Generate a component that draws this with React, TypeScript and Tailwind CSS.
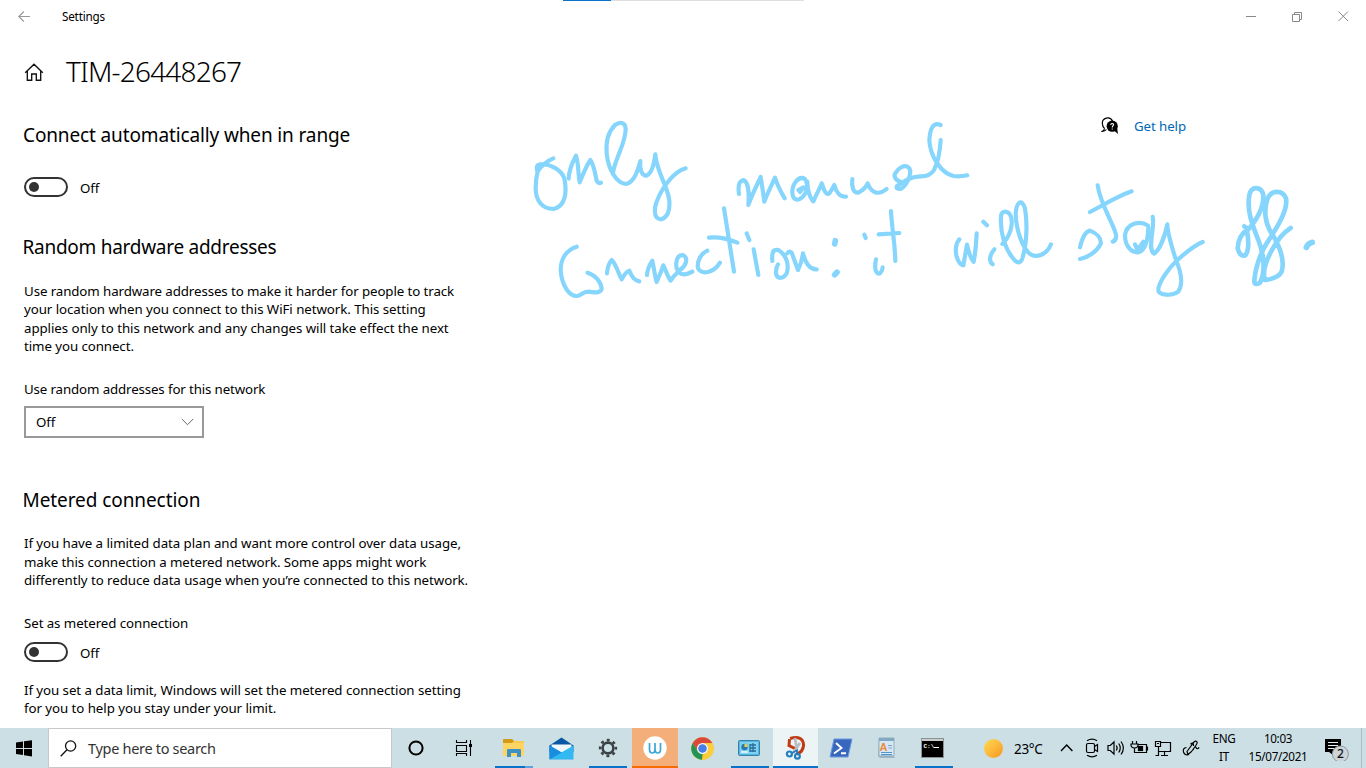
import React from "react";

const FONT = "font-['Noto_Sans','Open_Sans',sans-serif]";

function TextLine({ children, className }: { children: React.ReactNode; className: string }) {
  return <span className={`block whitespace-nowrap ${className}`}>{children}</span>;
}

function Toggle() {
  return (
    <div className="flex h-5 items-center gap-3 text-[13.3px] text-black">
      <div className="flex h-5 w-11 items-center rounded-full border-2 border-[#333] pl-[3px]">
        <div className="size-[10px] rounded-full bg-[#333]" />
      </div>
      <span className="pt-[3px] tracking-[-0.1px]">Off</span>
    </div>
  );
}

function Ink() {
  return (
    <svg
      className="pointer-events-none absolute left-0 top-0"
      width="1366"
      height="728"
      viewBox="0 0 1366 728"
      fill="none"
      stroke="#85d5fd"
      strokeWidth="12.5"
      strokeLinecap="round"
      strokeLinejoin="round"
    >
      <g transform="translate(520 110) scale(.33333)">
        <path d="M100 145Q70 157 52 186C50 170 48 166 60 163C90 160 125 180 133 205C142 250 135 290 100 297C65 297 47 270 47 235C47 210 50 195 54 180" />
        <path d="M146 206C147 180 158 155 168 137C176 160 174 190 179 217C188 195 200 165 211 150C222 165 225 190 230 212Q235 222 243 218" />
        <path d="M279 190C283 150 318 100 317 55C315 35 298 35 285 45C265 65 257 95 260 130C265 180 290 220 318 222C340 218 352 190 361 153C358 175 365 198 380 197C395 190 402 165 406 133C408 170 430 210 440 240C455 280 450 320 424 328C400 328 402 295 410 275C425 235 460 185 497 175" />
        <path d="M170 410C140 420 122 445 122 480C125 530 150 560 172 558C185 555 188 545 205 545C230 550 245 547 245 535C243 515 225 495 203 488" />
        <path d="M261 490C262 475 265 462 275 450C288 462 295 490 305 508C312 495 320 485 328 482C335 500 345 512 358 514" />
        <path d="M381 495C382 480 388 465 397 452C402 475 405 500 410 516C417 500 425 480 430 466C437 480 443 500 452 512C462 495 470 490 480 480C500 465 505 445 490 436C475 432 465 450 470 475C478 500 500 495 517 485" />
        <path d="M562 422C545 430 530 450 534 475C545 495 580 490 600 458" />
        <path d="M612 295L642 485M567 383C590 380 620 385 652 398" />
      </g>
      <g transform="translate(720 110) scale(.33333)">
        <path d="M57 252C53 225 58 213 70 210C85 215 88 250 85 285C92 265 108 230 122 201C127 230 130 255 133 275C142 250 155 225 165 203C172 225 185 250 194 265" />
        <path d="M255 207C235 195 215 225 217 250C220 275 240 275 256 250C265 230 262 210 250 204M235 240L250 232L240 246M262 215C262 240 270 265 280 274C290 250 300 235 305 220C312 240 318 258 328 250C335 240 338 235 343 225C348 245 360 262 378 260" />
        <path d="M397 207C394 230 400 250 415 248C430 240 438 232 443 220C450 240 470 262 500 237" />
        <path d="M544 216C526 212 520 198 526 190C535 173 552 165 562 170C582 180 563 222 545 235C535 240 526 234 531 228C550 215 570 200 600 199Q630 200 642 180C655 155 660 125 662 90" />
        <path d="M662 45C640 35 630 55 628 90C630 140 665 190 700 198Q720 201 742 196" />
        <path d="M80 370L88 390M101 418L115 495M157 453C155 425 160 417 175 420C200 435 208 465 200 490C190 508 170 508 168 490Q167 473 174 463M202 430Q208 421 215 428L234 480Q246 455 249 430Q262 480 290 478" />
        <path strokeWidth="17" d="M346 392L344 402M351 487L344 494" />
        <path d="M433 374L437 384M468 448C462 475 468 495 480 490Q488 482 488 472M513 303C515 350 525 400 526 453M476 373L538 369" />
      </g>
      <g transform="translate(930 170) scale(.33333)">
        <path d="M88 208C75 225 75 240 80 260Q88 285 100 286L111 224Q120 264 131 275Q138 240 140 190M160 155L171 166M193 238C178 255 176 275 188 283" />
        <path d="M217 222C240 200 250 165 243 140C235 120 213 120 213 140C210 190 225 240 255 272Q270 285 277 265C290 225 293 160 285 115C275 85 260 95 257 130C258 185 280 235 300 252C320 265 350 255 363 223" />
        <path d="M450 232C455 210 465 185 480 182C500 190 515 205 512 222C500 245 475 262 450 267M503 46C510 100 545 150 557 190Q562 210 548 215M480 126C520 105 560 80 605 64" />
      </g>
      <g transform="translate(1080 100) scale(.33333)">
        <path d="M204 377C180 360 140 370 135 405C135 440 155 458 175 457C198 450 204 420 205 382M165 433L173 450L190 425M218 350C226 385 200 445 222 461C240 450 255 405 262 373C262 400 275 440 288 480C305 520 308 555 295 575C275 590 235 585 235 570C235 550 265 505 290 482C320 455 345 435 368 426" />
        <path strokeWidth="14" d="M493 379L505 387Q475 405 473 445Q480 472 496 466C508 450 505 415 501 393C530 360 552 320 550 285C545 260 515 255 508 285C500 330 515 370 535 420C555 470 555 520 540 548Q523 558 523 543C525 510 540 460 560 430C590 385 625 330 618 295C608 270 575 268 563 295C550 330 555 370 575 400C600 440 615 480 605 515Q595 535 555 540C540 500 590 410 632 384" />
        <path strokeWidth="17" d="M679 442Q684 430 697 427" />
      </g>
    </svg>
  );
}

function HomeIcon() {
  return (
    <svg width="20" height="20" viewBox="0 0 20 20" fill="none" stroke="#111" strokeWidth="1.35">
      <path d="M1.2 10.7L10 2.2L18.8 10.7M3.3 9V18.2H7.7V12H12.3V18.2H16.7V9" />
    </svg>
  );
}

function HelpIcon() {
  return (
    <svg width="18" height="18" viewBox="0 0 18 18" fill="none">
      <path d="M3.5 11.4Q1.4 9.6 1.4 6.8A5.3 5.3 0 0 1 11.5 4M3.5 11.4Q3.5 13 1.2 14.4Q4 14.4 5.5 12.5" stroke="#000" strokeWidth="1.2" />
      <circle cx="11.2" cy="9.2" r="5.6" fill="#000" />
      <path d="M13 13.5L17 17L16 10Z" fill="#000" />
      <path d="M9.7 8Q9.8 6.5 11.2 6.5Q12.9 6.6 12.5 8.2Q11.2 9 11.2 10.4M11.2 11.4V12.4" stroke="#fff" strokeWidth="1.1" />
    </svg>
  );
}

function Task({ width, bg = "", bar = "", children }: { width: string; bg?: string; bar?: string; children: React.ReactNode }) {
  return (
    <div className={`flex h-10 shrink-0 flex-col items-center ${width} ${bg}`}>
      <div className="flex h-[38px] items-center justify-center pt-[2px]">{children}</div>
      <div className={`h-[2px] ${bar}`} />
    </div>
  );
}

function Taskbar() {
  return (
    <div className="flex h-10 w-full bg-[#cbdfe5] text-black">
      <div className="flex w-12 items-center justify-center">
        <svg width="17" height="17" viewBox="0 0 17 17"><path d="M0 2.5L7 1.5V8H0ZM8 1.3L16 .2V8H8ZM0 9H7V15L0 14ZM8 9H16V16.4L8 15.2Z" /></svg>
      </div>
      <div className="flex h-10 w-[344px] items-center gap-[11px] border border-[#c5c9cb] bg-white pl-[11px]">
        <svg width="17" height="17" viewBox="0 0 17 17" fill="none" stroke="#111" strokeWidth="1.3"><circle cx="10.6" cy="6" r="5.1" /><path d="M7 9.8L.7 16.2" /></svg>
        <span className="whitespace-nowrap pt-[2px] text-[14.5px] tracking-[-0.31px] text-[#333]">Type here to search</span>
      </div>
      <Task width="w-12">
        <svg width="16" height="16" viewBox="0 0 16 16"><circle cx="8" cy="8" r="6.6" fill="none" stroke="#000" strokeWidth="2" /></svg>
      </Task>
      <Task width="w-[47px]">
        <svg width="18" height="16" viewBox="0 0 18 16" fill="none" stroke="#000" strokeWidth="1.1"><path d="M1.5 0V2.5H11.5V0M1.5 5.5H11.5V11.5H1.5ZM1.5 16V13.5H11.5V16M15.5 0V16" /><rect x="14" y="4" width="3" height="3" fill="#000" stroke="none" /></svg>
      </Task>
      <div className="ml-[4px] flex">
        <Task width="w-[46px]" bar="w-[38px] bg-[linear-gradient(90deg,#0a72c8_79%,#5ea2dc_79%)]">
          <svg width="22" height="20" viewBox="0 0 22 20">
            <path d="M0 2Q0 1 1 1H9L11 3H20Q21 3 21 4V18H0Z" fill="#f9cb4c" /><path d="M0 2Q0 1 1 1H9L11 3L9 5H0Z" fill="#d49a16" /><path d="M0 5H21V18H0Z" fill="#fed463" /><path d="M4 19V12Q4 11 5 11H17Q18 11 18 12V19H14V15H8V19Z" fill="#3e91c5" />
          </svg>
        </Task>
        <Task width="w-[48px]">
          <svg width="25" height="23" viewBox="0 0 25 23"><path d="M.5 8.5L12.5 .5L24.5 8.5V15H.5Z" fill="#0b58a5" /><path d="M2.5 7.5H22.5V14L12.5 17L2.5 13Z" fill="#f1f8fd" /><path d="M.5 8.5L24.5 22.2H.5Z" fill="#168bdc" /><path d="M24.5 8.5V22.2H.5Z" fill="#33b9f2" /><path d="M.5 8.5V22.2L12.5 15.5Z" fill="#198ede" /></svg>
        </Task>
        <Task width="w-[46px]" bar="w-[38px] bg-[#0a72c8]">
          <svg width="20" height="20" viewBox="0 0 20 20" fill="none" stroke="#3b4145"><circle cx="10" cy="10" r="5.4" strokeWidth="2.6" /><circle cx="10" cy="10" r="7.9" strokeWidth="2.5" strokeDasharray="2.9 3.305" strokeDashoffset="1.45" /></svg>
        </Task>
        <Task width="ml-px w-[46px]" bg="bg-[#f3ae79]" bar="w-full bg-[#f56b00]">
          <svg className="mr-px" width="24" height="24" viewBox="0 0 24 24"><circle cx="12" cy="12" r="11.7" fill="#fff" /><path d="M6.5 7V13Q6.5 17 9.3 17Q12 17 12 13V7M12 13Q12 17 14.8 17Q17.5 17 17.5 13V7" fill="none" stroke="#3aa6d8" strokeWidth="1.7" /></svg>
        </Task>
        <Task width="ml-px w-[47px]">
          <svg width="23" height="23" viewBox="0 0 23 23">
            <circle cx="11.5" cy="11.5" r="11.3" fill="#fbc72f" /><path d="M1.7 5.9A11.3 11.3 0 0 1 21.3 5.9H11.5V11.5L6.7 14.3Z" fill="#da493b" /><path d="M1.7 5.9L6.7 14.3L11.5 17L11 22.8A11.3 11.3 0 0 1 1.7 5.9" fill="#239452" /><path d="M11 22.8L16.4 14.2V7H21.6A11.3 11.3 0 0 1 11 22.8" fill="#fdce3b" /><circle cx="11.5" cy="11.5" r="5.5" fill="#f6faff" /><circle cx="11.5" cy="11.5" r="4.3" fill="#477fe8" />
          </svg>
        </Task>
        <Task width="w-[47px]" bar="w-[38px] bg-[#0a72c8]">
          <svg className="mr-[2px]" width="22" height="18" viewBox="0 0 22 18"><rect x=".5" y="1.5" width="21" height="15" rx="1" fill="#54b5e3" stroke="#3884a8" /><rect x="2" y="3" width="18" height="12" fill="#80d3f0" /><circle cx="6.5" cy="8" r="3.2" fill="#277aad" /><path d="M6.5 8V4.8A3.2 3.2 0 0 1 9.7 8Z" fill="#f7cf49" /><path d="M12 5V13M12 6H18M12 9H18M12 12H18M15 4V13" stroke="#276e9c" strokeWidth="1.3" /><path d="M3 13H10" stroke="#fff" strokeWidth="1.3" /></svg>
        </Task>
        <Task width="w-[45px]" bg="bg-[#edf4f6]" bar="w-full bg-[#0a72c8]">
          <svg width="22" height="24" viewBox="0 0 22 24" fill="none"><path d="M5 2.5Q18-1 18.6 9Q18 16 12 18M4.5 3L4 9.5Q8 11.5 12 13.5" stroke="#c23a13" strokeWidth="3" /><path d="M10 2L12 15M15 7L8 17" stroke="#b8bcc0" strokeWidth="2.7" /><circle cx="4.4" cy="18" r="2.5" stroke="#237fbd" strokeWidth="2.2" /><circle cx="12.4" cy="20.3" r="2.4" stroke="#237fbd" strokeWidth="2.2" /><path d="M7 17L12 14.5V18" stroke="#237fbd" strokeWidth="1.8" /></svg>
        </Task>
        <Task width="w-[46px]">
          <svg width="24" height="20" viewBox="0 0 24 20"><path d="M5 1H23L19 19H1Z" fill="#3867bd" stroke="#6f9ae0" /><path d="M7 5L12.5 10L5 15.5M12 15.2H17" fill="none" stroke="#fff" strokeWidth="1.9" /></svg>
        </Task>
        <Task width="w-[46px]">
          <svg width="20" height="22" viewBox="0 0 20 22"><path d="M2 1H17V20L19 21H3L1 19Z" fill="#a4b6c2" /><path d="M2 1H17V19H2Z" fill="#d5e7f2" stroke="#8ca4b4" strokeWidth=".8" /><path d="M2 1H17V4H2Z" fill="#82a7c3" /><path d="M4 15.5H15M4 17.6H15" stroke="#5794c9" strokeWidth="1.1" /><text x="2.6" y="13.8" fontSize="11" fontWeight="700" fill="#ed883e" fontFamily="Liberation Sans">A</text><path d="M11 8.5H15M11.5 11H15" stroke="#7da4c6" /></svg>
        </Task>
        <Task width="w-[47px]" bar="w-[38px] bg-[#0a72c8]">
          <svg className="mr-[2px]" width="23" height="20" viewBox="0 0 23 20"><rect x=".5" y=".5" width="22" height="19" fill="#000" stroke="#8d9294" /><rect x="1" y="1" width="21" height="2" fill="#c8cccd" /><text x="2.5" y="10" fontSize="6" fontWeight="700" fill="#fff" fontFamily="Liberation Mono">C:\</text><path d="M13 9.5H18" stroke="#fff" /></svg>
        </Task>
      </div>
      <div className="ml-[27px] flex h-10 items-center">
        <div className="size-[19px] rounded-full bg-linear-to-br from-[#ffda52] to-[#f59720]" />
        <span className="ml-[11px] w-[46px] whitespace-nowrap pt-[2px] text-[13.5px] tracking-[-0.3px]">23°C</span>
        <svg width="140" height="24" viewBox="0 0 140 24" fill="none" stroke="#000" strokeWidth="1.2">
          <path d="M1 15L6.7 9L12.4 15" strokeWidth="1.4" />
          <path d="M27 4.7Q32 1.5 37 4.7M27 19.3Q32 22.5 37 19.3" /><rect x="26.5" y="7.5" width="8" height="9" rx="1.5" /><path d="M34.5 10.5L37.5 8.5V15.5L34.5 13.5" />
          <path d="M48 9.5H50.3L54 6V18L50.3 14.5H48ZM56.3 9.5Q58 12 56.3 14.5M58.7 7.5Q61.8 12 58.7 16.5M61 5.5Q65.7 12 61 18.5" />
          <path d="M78 8.5H86.5V16.5H74.5V14M87.5 10.5V14.5M72.5 5V8M76.5 5V8M71 8H78V9.5Q77.5 12 74.5 12Q71.5 12 71 9.5ZM74.5 12V17" /><rect x="78.5" y="10.5" width="4" height="4" fill="#000" />
          <path d="M101 6.5H110.5V15.5H98.5V11M104.5 15.5V19M101 19.5H108M95.5 5.5H100.5V10.5H95.5ZM98.5 11V19.5H95.5M97 7.5H99" />
          <path d="M126.5 11.5Q122.5 12 123.5 16Q125 20 129 18.5M127 15.5L134 6Q136 4 137.2 6.2Q137.5 8 131.5 15.5L128 18.5ZM130.5 8Q134 5.5 133.5 10M133 14Q135 9.5 136 11.5Q137 14 139.2 11.5" />
        </svg>
        <div className="ml-[6px] flex w-[36px] -translate-y-px flex-col items-center text-[11.7px] leading-[18px] tracking-[-0.35px]"><span>ENG</span><span>IT</span></div>
        <div className="ml-[3px] flex w-[66px] -translate-y-px flex-col items-center whitespace-nowrap text-[11.7px] leading-[18px] tracking-[-0.33px]"><span>10:03</span><span>15/07/2021</span></div>
        <svg className="ml-[13px]" width="28" height="26" viewBox="0 0 28 26"><path d="M1 4H17V17H9V20L5 17H1Z" fill="#000" /><path d="M4 7.5H14M4 10.5H14M4 13.5H10" stroke="#e4eef1" strokeWidth="1.1" /><circle cx="16.4" cy="19" r="8" fill="#cdd5d9" stroke="#8e989e" /><text x="16.4" y="23.4" textAnchor="middle" fontSize="12" fill="#111" stroke="#111" strokeWidth=".2" fontFamily="Noto Sans">2</text></svg>
        <div className="ml-[9px] h-10 w-px bg-[#a9bdc4]" />
      </div>
    </div>
  );
}

export default function App() {
  return (
    <div className={`relative flex h-[768px] w-[1366px] flex-col overflow-hidden bg-white text-black ${FONT}`}>
      <div className="flex h-px pl-[563px]"><div className="w-12 bg-[#0a72c8]" /><div className="w-[193px] bg-[#dfdfdf]" /></div>
      <header className="flex h-[31px] items-center pl-[18px] pr-[17px]">
        <svg width="13" height="12" viewBox="0 0 13 12" fill="none" stroke="#999" strokeWidth="1.1"><path d="M12 5.5H.8M5.8 .5L.8 5.5L5.8 10.5" /></svg>
        <span className="ml-[31px] text-[11.7px] tracking-[-0.2px]">Settings</span>
        <div className="ml-auto flex items-center gap-9 text-[#888]">
          <svg width="10" height="10" viewBox="0 0 10 10" stroke="currentColor"><path d="M0 4.5H10" /></svg>
          <svg width="10" height="10" viewBox="0 0 10 10" fill="none" stroke="currentColor"><path d="M.5 2.5H7.5V9.5H.5ZM2.5 2.5V.5H9.5V7.5H7.5" /></svg>
          <svg width="11" height="11" viewBox="0 0 11 11" stroke="currentColor"><path d="M.5 .5L10 10M10 .5L.5 10" /></svg>
        </div>
      </header>
      <div className="flex h-20 items-center pl-6"><HomeIcon /><h1 className="ml-[22px] whitespace-nowrap pb-[2px] text-[28px] font-light tracking-[-0.8px]">TIM-26448267</h1></div>
      <main className="flex h-[616px] justify-between pl-6 pr-[180px]">
        <section className="w-[460px] text-[13.3px]">
          <h2 className="-ml-px mt-[8px] h-[30px] whitespace-nowrap text-[19px] leading-[30px] tracking-[-0.13px]">Connect automatically when in range</h2>
          <div className="mt-[27px]"><Toggle /></div>
          <h2 className="-ml-[1.5px] mt-[35px] h-[30px] whitespace-nowrap text-[19px] leading-[30px] tracking-[-0.27px]">Random hardware addresses</h2>
          <div className="mt-[20px] leading-[18.33px]">
            <TextLine className="tracking-[-0.095px]">Use random hardware addresses to make it harder for people to track</TextLine>
            <TextLine className="tracking-[-0.06px]">your location when you connect to this WiFi network. This setting</TextLine>
            <TextLine className="tracking-[-0.065px]">applies only to this network and any changes will take effect the next</TextLine>
            <TextLine className="tracking-[-0.08px]">time you connect.</TextLine>
          </div>
          <div className="mt-[25px] h-[18px] leading-[18px] tracking-[-0.13px]">Use random addresses for this network</div>
          <button className="mt-[8px] flex h-8 w-[180px] items-center justify-between border-2 border-[#999] pl-[10px] pr-[8px]">
            <span className="pt-px tracking-[-0.1px]">Off</span>
            <svg width="13" height="8" viewBox="0 0 13 8" fill="none" stroke="#666"><path d="M.8 1L6.5 6.7L12.2 1" /></svg>
          </button>
          <h2 className="-ml-[1.5px] mt-[47px] h-[30px] whitespace-nowrap text-[19px] leading-[30px] tracking-[-0.08px]">Metered connection</h2>
          <div className="mt-[19px] leading-[18.33px]">
            <TextLine className="tracking-[-0.067px]">If you have a limited data plan and want more control over data usage,</TextLine>
            <TextLine className="tracking-[-0.08px]">make this connection a metered network. Some apps might work</TextLine>
            <TextLine className="tracking-[-0.06px]">differently to reduce data usage when you’re connected to this network.</TextLine>
          </div>
          <div className="mt-[25px] h-[18px] leading-[18px] tracking-[-0.08px]">Set as metered connection</div>
          <div className="mt-[10px]"><Toggle /></div>
          <div className="mt-[19px] leading-[18px]">
            <TextLine className="tracking-[-0.06px]">If you set a data limit, Windows will set the metered connection setting</TextLine>
            <TextLine className="tracking-[-0.06px]">for you to help you stay under your limit.</TextLine>
          </div>
        </section>
        <a className="mt-[4px] flex h-5 items-center gap-[15px] text-[13.3px] text-[#0067b8]"><HelpIcon /><span className="whitespace-nowrap pt-[2px] tracking-[-0.08px]">Get help</span></a>
      </main>
      <Taskbar />
      <Ink />
    </div>
  );
}
